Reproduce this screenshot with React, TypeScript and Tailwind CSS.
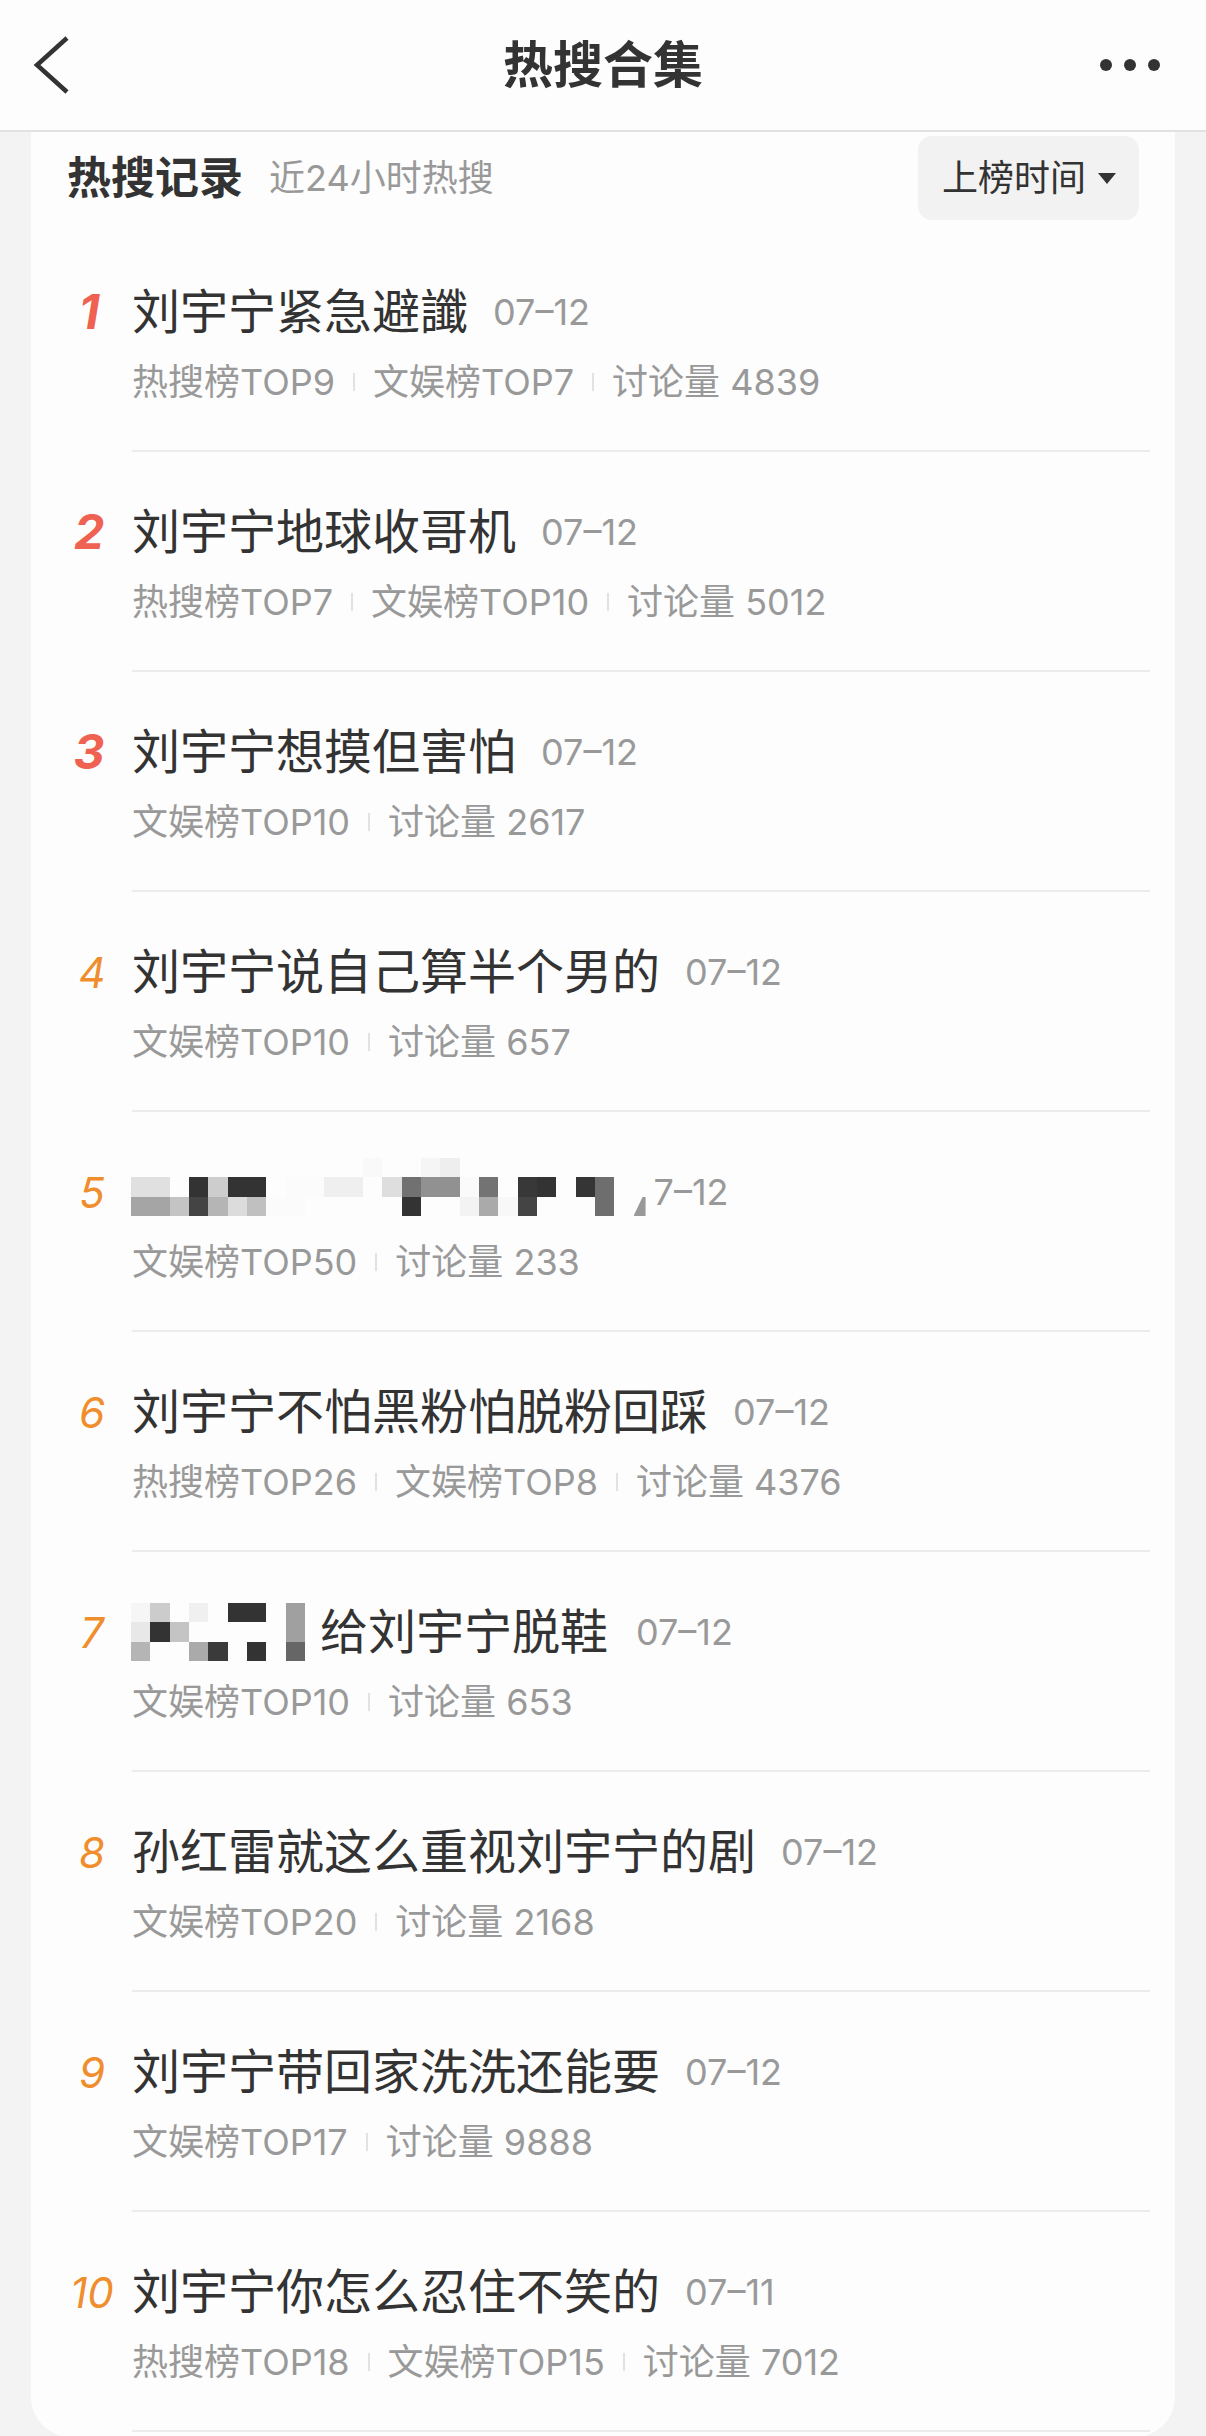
import React from "react";

const W = "#fdfdfd";

// mosaic cells, one array per row
const mosaic5: string[][] = [
  [W, W, W, W, W, W, W, W, W, W, W, W, "#f9f9f9", W, W, "#f5f5f5", "#eeeeee", W, W, W, W, W, W, W, W, W],
  ["#e0e0e0", "#e0e0e0", W, "#333333", "#cdcdcd", "#333333", "#333333", W, "#fbfbfb", "#fbfbfb", "#efefef", "#efefef", W, "#dedede", "#717171", "#919191", "#919191", "#fafafa", "#737373", W, "#383838", "#333333", W, "#353535", "#6e6e6e", W],
  ["#a5a5a5", "#a5a5a5", "#c4c4c4", "#444444", "#b5b5b5", "#dcdcdc", "#c0c0c0", "#fbfbfb", "#fbfbfb", W, W, W, W, W, "#333333", W, W, "#f3f3f3", "#aaaaaa", "#f8f8f8", "#444444", W, W, W, "#6e6e6e", W],
];

const mosaic7: string[][] = [
  ["#f6f6f6", "#cccccc", W, "#f0f0f0", W, "#333333", "#333333", W, "#a0a0a0"],
  ["#e8e8e8", "#333333", "#c4c4c4", W, W, W, W, W, "#a0a0a0"],
  ["#b5b5b5", W, W, "#aaaaaa", "#3a3a3a", W, "#333333", W, "#666666"],
];

interface Item {
  title: string;
  date: string;
  tags: string[];
  mosaic?: "five" | "seven";
}

const items: Item[] = [
  { title: "刘宇宁紧急避讖", date: "07–12", tags: ["热搜榜TOP9", "文娱榜TOP7", "讨论量 4839"] },
  { title: "刘宇宁地球收哥机", date: "07–12", tags: ["热搜榜TOP7", "文娱榜TOP10", "讨论量 5012"] },
  { title: "刘宇宁想摸但害怕", date: "07–12", tags: ["文娱榜TOP10", "讨论量 2617"] },
  { title: "刘宇宁说自己算半个男的", date: "07–12", tags: ["文娱榜TOP10", "讨论量 657"] },
  { title: "", date: "7–12", tags: ["文娱榜TOP50", "讨论量 233"], mosaic: "five" },
  { title: "刘宇宁不怕黑粉怕脱粉回踩", date: "07–12", tags: ["热搜榜TOP26", "文娱榜TOP8", "讨论量 4376"] },
  { title: "给刘宇宁脱鞋", date: "07–12", tags: ["文娱榜TOP10", "讨论量 653"], mosaic: "seven" },
  { title: "孙红雷就这么重视刘宇宁的剧", date: "07–12", tags: ["文娱榜TOP20", "讨论量 2168"] },
  { title: "刘宇宁带回家洗洗还能要", date: "07–12", tags: ["文娱榜TOP17", "讨论量 9888"] },
  { title: "刘宇宁你怎么忍住不笑的", date: "07–11", tags: ["热搜榜TOP18", "文娱榜TOP15", "讨论量 7012"] },
];

const Mosaic = ({ rows }: { rows: string[][] }) => {
  return (
    <div className="flex flex-col">
      {rows.map((row, r) => (
        <div key={r} className="flex">
          {row.map((c, i) => (
            <div key={i} className="w-[19.33px] h-[19.33px]" style={{ backgroundColor: c }} />
          ))}
        </div>
      ))}
    </div>
  );
};

const Row = ({ item, rank }: { item: Item; rank: number }) => {
  const top = rank <= 3;
  return (
    <div className="flex">
      <div className={top ? "w-[101px] shrink-0 pl-[15px] pt-[52px]" : "w-[101px] shrink-0 pl-[21px] pt-[52px]"}>
        <div
          className={
            top
              ? "h-[56px] flex items-center justify-center italic font-bold text-[48px] text-[#ef6150]"
              : "h-[56px] flex items-center justify-center italic text-[42px] text-[#f08d2d]"
          }
        >
          {rank}
        </div>
      </div>
      <div className="flex-1 mr-[25px] border-b-2 border-[#ececec] pt-[52px] pb-[46px]">
        <div className="h-[56px] flex items-center">
          {item.mosaic === "five" && (
            <>
              <div className="mb-[10px] -ml-[1px]">
                <Mosaic rows={mosaic5} />
              </div>
              <div className="w-[12px] h-[19px] mt-[29px] bg-[#999999] [clip-path:polygon(75%_0,100%_0,100%_100%,0_100%)]" />
            </>
          )}
          {item.mosaic === "seven" && (
            <div className="-ml-[1px]">
              <Mosaic rows={mosaic7} />
            </div>
          )}
          {item.title && (
            <span
              className={
                item.mosaic === "seven"
                  ? "ml-[15px] text-[48px] leading-[56px] text-[#333333] whitespace-nowrap"
                  : "text-[48px] leading-[56px] text-[#333333] whitespace-nowrap"
              }
            >
              {item.title}
            </span>
          )}
          <span
            className={
              item.mosaic === "five"
                ? "ml-[8px] text-[36px] text-[#999999] whitespace-nowrap"
                : item.mosaic === "seven"
                  ? "ml-[28px] text-[36px] text-[#999999] whitespace-nowrap"
                  : "ml-[25px] text-[36px] text-[#999999] whitespace-nowrap"
            }
          >
            {item.date}
          </span>
        </div>
        <div className="mt-[20px] h-[44px] flex items-center text-[36px] text-[#999999] whitespace-nowrap">
          {item.tags.map((t, i) => (
            <React.Fragment key={t}>
              {i > 0 && <span className="w-[2px] h-[18px] bg-[#e2e2e2] mx-[18px]" />}
              <span>{t}</span>
            </React.Fragment>
          ))}
        </div>
      </div>
    </div>
  );
};

export default function App() {
  return (
    <div className="w-[1206px] h-[2436px] overflow-hidden bg-[#f3f3f3] font-[Inter,'Noto_Sans_CJK_SC',sans-serif]">
      <div className="h-[132px] bg-[#fdfdfd] border-b-2 border-[#e2e2e2] grid grid-cols-[1fr_auto_1fr] items-center">
        <div className="pl-[33px] flex items-center">
          <svg width="40" height="58" viewBox="0 0 40 58" fill="none">
            <path d="M34 2 L4 29 L34 56" stroke="#333333" strokeWidth="4.5" />
          </svg>
        </div>
        <h1 className="text-[50px] font-bold text-[#333333] leading-none">热搜合集</h1>
        <div className="flex justify-end items-center gap-[12px] pr-[46px]">
          <span className="w-[12px] h-[12px] rounded-full bg-[#333333]" />
          <span className="w-[12px] h-[12px] rounded-full bg-[#333333]" />
          <span className="w-[12px] h-[12px] rounded-full bg-[#333333]" />
        </div>
      </div>

      <div className="mx-[31px] bg-[#fdfdfd] rounded-b-[40px] pb-[5px]">
        <div className="h-[100px] pt-[4px] px-[36px]">
          <div className="h-[84px] flex items-center justify-between">
            <div className="flex items-center">
              <span className="text-[44px] font-bold text-[#333333]">热搜记录</span>
              <span className="ml-[26px] text-[36px] text-[#999999]">近24小时热搜</span>
            </div>
            <button className="h-[84px] rounded-[14px] bg-[#f2f2f2] pl-[24px] pr-[22px] flex items-center">
              <span className="text-[36px] text-[#333333]">上榜时间</span>
              <svg className="ml-[11px]" width="20" height="13" viewBox="0 0 20 13">
                <path d="M1 1 H19 L10 12 Z" fill="#333333" />
              </svg>
            </button>
          </div>
        </div>
        {items.map((item, i) => (
          <Row key={i} item={item} rank={i + 1} />
        ))}
      </div>
    </div>
  );
}
